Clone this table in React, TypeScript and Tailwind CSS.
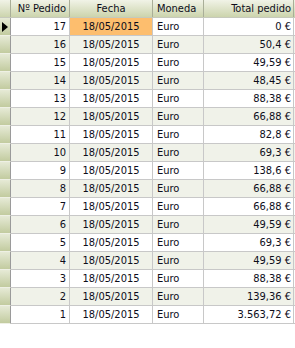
import React from "react";

const rows: [number, string][] = [
  [17, "0 €"],
  [16, "50,4 €"],
  [15, "49,59 €"],
  [14, "48,45 €"],
  [13, "88,38 €"],
  [12, "66,88 €"],
  [11, "82,8 €"],
  [10, "69,3 €"],
  [9, "138,6 €"],
  [8, "66,88 €"],
  [7, "66,88 €"],
  [6, "49,59 €"],
  [5, "69,3 €"],
  [4, "49,59 €"],
  [3, "88,38 €"],
  [2, "139,36 €"],
  [1, "3.563,72 €"],
];

export default function App() {
  return (
    <div
      className="w-[295px] h-[348px] bg-white text-[11px] leading-[17px] text-[#0d0d1a]"
      style={{ fontFamily: '"DejaVu Sans Condensed", "Liberation Sans", Arial, sans-serif' }}
    >
      <div className="flex h-[18px] border-b border-[#c6c9bc] bg-gradient-to-b from-[#f1f3e7] to-[#ccd4ad]">
        <div className="w-[11px] border-r border-[#a9ae98]" />
        <div className="w-[59px] border-r border-[#a9ae98] pr-[3px] text-right">Nº Pedido</div>
        <div className="w-[83px] border-r border-[#a9ae98] text-center">Fecha</div>
        <div className="w-[51px] border-r border-[#a9ae98] pl-[4px]">Moneda</div>
        <div className="w-[90px] border-r border-[#a9ae98] pr-[2px] text-right">Total pedido</div>
      </div>
      {rows.map(([n, total], i) => (
        <div
          key={n}
          className={`flex h-[18px] border-b border-[#c8c8c8] ${i % 2 === 1 ? "bg-[#f0f2e9]" : "bg-white"}`}
        >
          <div className="relative w-[11px] -mb-px border-r border-[#9a9a9a] border-b border-b-[#eef0e4] bg-gradient-to-b from-[#e6ead6] to-[#c2cb9f]">
            {i === 0 && (
              <svg className="absolute left-[2px] top-[4px]" width="6" height="10" viewBox="0 0 6 10">
                <path d="M0 0 L6 5 L0 10 Z" fill="#000" />
              </svg>
            )}
          </div>
          <div className="w-[59px] border-r border-[#c8c8c8] pr-[3px] text-right">{n}</div>
          <div
            className={`w-[83px] border-r border-[#c8c8c8] text-center ${i === 0 ? "bg-[#fdbe6e]" : ""}`}
          >
            18/05/2015
          </div>
          <div className="w-[51px] border-r border-[#c8c8c8] pl-[4px]">Euro</div>
          <div className="w-[90px] border-r border-[#c8c8c8] pr-[2px] text-right">{total}</div>
        </div>
      ))}
    </div>
  );
}
